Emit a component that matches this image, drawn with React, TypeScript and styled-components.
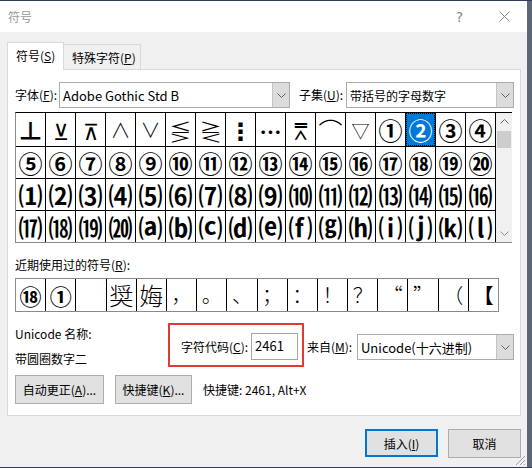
import styled, { createGlobalStyle } from 'styled-components';

const GlobalStyle = createGlobalStyle`
  html, body {
    margin: 0;
    padding: 0;
  }
  body {
    background:
      linear-gradient(#2e3f5a 0 1px, transparent 1px),
      linear-gradient(to right, #f0f0f0 0 527px, #5c6674 527px);
    font-family: "Noto Sans CJK SC", "Noto Sans", sans-serif;
    font-size: 12px;
    color: #000;
  }
  * {
    box-sizing: border-box;
  }
`;

const Window = styled.div`
  position: relative;
  margin-top: 1px;
  width: 527px;
  height: 466px;
  background: #f0f0f0;
  display: flex;
  flex-direction: column;
`;

const TitleBar = styled.div`
  height: 31px;
  background: #fff;
  display: flex;
  align-items: center;
  padding-left: 8px;
  color: #9a9a9a;
  font-size: 12px;
`;

const Title = styled.span`
  flex: 1;
`;

const TitleButton = styled.div`
  width: 45px;
  height: 31px;
  display: flex;
  align-items: center;
  justify-content: center;
  color: #8a8a8a;
  font-family: "DejaVu Sans", sans-serif;
  font-size: 14px;
`;

const Body = styled.div`
  flex: 1;
  padding: 10px 6px 0 7px;
  display: flex;
  flex-direction: column;
`;

const TabRow = styled.div`
  display: flex;
  align-items: flex-end;
  height: 28px;
  margin-bottom: -1px;
  position: relative;
  z-index: 1;
`;

const Tab = styled.div<{ $active?: boolean; $w: number }>`
  width: ${(p) => p.$w}px;
  height: ${(p) => (p.$active ? 28 : 26)}px;
  padding-left: 8px;
  padding-bottom: ${(p) => (p.$active ? 2 : 0)}px;
  background: ${(p) => (p.$active ? '#fff' : '#f0f0f0')};
  border: 1px solid #d9d9d9;
  border-bottom: ${(p) => (p.$active ? 'none' : '1px solid #d9d9d9')};
  margin-left: ${(p) => (p.$active ? 0 : -1)}px;
  display: flex;
  align-items: center;
`;

const Panel = styled.div`
  height: 347px;
  background: #fff;
  border: 1px solid #d9d9d9;
  padding: 12px 6px 0 7px;
  display: flex;
  flex-direction: column;
`;

const FontRow = styled.div`
  display: flex;
  align-items: center;
  height: 26px;
`;

const Label = styled.div<{ $w?: number; $ml?: number }>`
  width: ${(p) => (p.$w ? `${p.$w}px` : 'auto')};
  margin-left: ${(p) => p.$ml ?? 0}px;
  white-space: nowrap;
  line-height: 16px;
`;

const Combo = styled.div<{ $w?: number }>`
  width: ${(p) => (p.$w ? `${p.$w}px` : 'auto')};
  flex: ${(p) => (p.$w ? 'none' : 1)};
  height: 26px;
  border: 1px solid #acacac;
  background: #fff;
  display: flex;
  align-items: stretch;
`;

const ComboText = styled.div<{ $size?: number }>`
  flex: 1;
  padding-left: 3px;
  display: flex;
  align-items: center;
  font-size: ${(p) => p.$size ?? 12}px;
  white-space: nowrap;
`;

const ComboButton = styled.div`
  width: 17px;
  background: #dcdcdc;
  border-left: 1px solid #c4c4c4;
  display: flex;
  align-items: center;
  justify-content: center;
`;

const GridFrame = styled.div`
  margin-top: 4px;
  width: 497px;
  display: flex;
  border-top: 1px solid #000;
  border-left: 1px solid #8a8a8a;
  border-bottom: 1px solid #8a8a8a;
`;

const SymbolGrid = styled.div`
  display: grid;
  grid-template-columns: repeat(16, 29px);
  grid-template-rows: 33px repeat(3, 31px);
  gap: 1px;
  background: #000;
  border-right: 1px solid #000;
`;

const Cell = styled.div<{ $sel?: boolean; $thin?: boolean; $size?: number }>`
  background: ${(p) => (p.$sel ? '#0078d7' : '#fff')};
  color: ${(p) => (p.$sel ? '#fff' : '#000')};
  outline: ${(p) => (p.$sel ? '1px dotted #000' : 'none')};
  outline-offset: -1px;
  display: flex;
  align-items: center;
  justify-content: center;
  font-family: "Noto Sans CJK SC", "DejaVu Sans", sans-serif;
  font-weight: ${(p) => (p.$thin ? 300 : 700)};
  font-size: ${(p) => p.$size ?? 24}px;
  line-height: 1;
`;

const ScrollBar = styled.div`
  width: 16px;
  background: #f0f0f0;
  display: flex;
  flex-direction: column;
`;

const ScrollArrow = styled.div`
  height: 17px;
  display: flex;
  align-items: center;
  justify-content: center;
`;

const ScrollThumb = styled.div`
  height: 17px;
  margin: 1px 1px 0;
  background: #cdcdcd;
`;

const ScrollTrack = styled.div`
  flex: 1;
`;

const RecentLabel = styled.div`
  margin-top: 14px;
  line-height: 16px;
`;

const RecentRow = styled.div`
  margin-top: 5px;
  width: 484px;
  height: 34px;
  display: grid;
  grid-template-columns: repeat(16, 1fr);
  gap: 1px;
  background: #000;
  border: 1px solid #8a8a8a;
`;

const InfoRow = styled.div`
  margin-top: 11px;
  display: flex;
  align-items: flex-start;
`;

const NameCol = styled.div`
  width: 153px;
  padding-top: 3px;
  display: flex;
  flex-direction: column;
  gap: 9px;
  line-height: 16px;
`;

const Highlight = styled.div`
  width: 136px;
  height: 44px;
  border: 2px solid #e23a36;
  padding: 8px 4px 0 11px;
  display: flex;
  align-items: flex-start;
`;

const HighlightInner = styled.div`
  display: flex;
  align-items: center;
  height: 27px;
  width: 100%;
`;

const CodeInput = styled.div`
  margin-left: auto;
  width: 47px;
  height: 27px;
  border: 1px solid #a5a5a5;
  background: #fff;
  padding: 4px 0 0 3px;
  font-size: 13px;
  line-height: 16px;
`;

const FromGroup = styled.div`
  margin-top: 11px;
  margin-left: 3px;
  display: flex;
  align-items: center;
  flex: 1;
`;

const ButtonRow = styled.div`
  margin-top: 8px;
  display: flex;
  align-items: center;
  gap: 11px;
`;

const Button = styled.div<{ $w: number; $default?: boolean }>`
  width: ${(p) => p.$w}px;
  height: ${(p) => (p.$default ? 28 : 29)}px;
  background: #e1e1e1;
  border: 1px solid ${(p) => (p.$default ? '#0078d7' : '#adadad')};
  box-shadow: ${(p) => (p.$default ? 'inset 0 0 0 1px #0078d7' : 'none')};
  display: flex;
  align-items: center;
  justify-content: center;
  white-space: nowrap;
`;

const Footer = styled.div`
  margin-top: 13px;
  display: flex;
  justify-content: flex-end;
  gap: 10px;
`;

const Grip = styled.svg`
  position: absolute;
  right: 1px;
  bottom: 1px;
`;

const Chevron = ({ up = false, color = '#606060' }: { up?: boolean; color?: string }) => (
  <svg width="9" height="5" viewBox="0 0 9 5">
    <polyline
      points={up ? '0.5,4.5 4.5,0.5 8.5,4.5' : '0.5,0.5 4.5,4.5 8.5,0.5'}
      fill="none"
      stroke={color}
      strokeWidth="1"
    />
  </svg>
);

type Glyph = { ch: string; thin?: boolean; size?: number; sel?: boolean };

const row1: Glyph[] = [
  { ch: '⊥', size: 24 },
  { ch: '⊻', thin: true, size: 22 },
  { ch: '⊼', thin: true, size: 22 },
  { ch: '∧', thin: true, size: 20 },
  { ch: '∨', thin: true, size: 20 },
  { ch: '⋚', thin: true, size: 22 },
  { ch: '⋛', thin: true, size: 22 },
  { ch: '⋮', size: 24 },
  { ch: '⋯', size: 22 },
  { ch: '⩞', thin: true, size: 22 },
  { ch: '⌒', thin: true, size: 24 },
  { ch: '▽', thin: true, size: 18 },
  { ch: '①' },
  { ch: '②', sel: true },
  { ch: '③' },
  { ch: '④' },
];

const fromCode = (start: number, count: number) =>
  Array.from({ length: count }, (_, i) => String.fromCodePoint(start + i));

const rows: Glyph[] = [
  ...row1,
  ...fromCode(0x2464, 16).map((ch) => ({ ch })),
  ...fromCode(0x2474, 16).map((ch) => ({ ch })),
  ...fromCode(0x2484, 4).map((ch) => ({ ch })),
  ...fromCode(0x249c, 12).map((ch) => ({ ch })),
];

const recent: Glyph[] = [
  { ch: '⑱', size: 22 },
  { ch: '①', size: 22 },
  { ch: '' },
  { ch: '奨', thin: true, size: 24 },
  { ch: '娒', thin: true, size: 24 },
  { ch: '，', thin: true, size: 20 },
  { ch: '。', thin: true, size: 20 },
  { ch: '、', thin: true, size: 20 },
  { ch: '；', thin: true, size: 20 },
  { ch: '：', thin: true, size: 20 },
  { ch: '！', thin: true, size: 20 },
  { ch: '？', thin: true, size: 20 },
  { ch: '“', thin: true, size: 20 },
  { ch: '”', thin: true, size: 20 },
  { ch: '（', thin: true, size: 20 },
  { ch: '【', size: 20 },
];

export default function App() {
  return (
    <>
      <GlobalStyle />
      <Window>
        <TitleBar>
          <Title>符号</Title>
          <TitleButton>?</TitleButton>
          <TitleButton>
            <svg width="11" height="11" viewBox="0 0 11 11">
              <path d="M0.5 0.5 L10.5 10.5 M10.5 0.5 L0.5 10.5" stroke="#8a8a8a" strokeWidth="1" />
            </svg>
          </TitleButton>
        </TitleBar>
        <Body>
          <TabRow>
            <Tab $active $w={57}>
              符号(<u>S</u>)
            </Tab>
            <Tab $w={78}>
              特殊字符(<u>P</u>)
            </Tab>
          </TabRow>
          <Panel>
            <FontRow>
              <Label $w={44}>
                字体(<u>F</u>):
              </Label>
              <Combo $w={231}>
                <ComboText $size={13}>Adobe Gothic Std B</ComboText>
                <ComboButton>
                  <Chevron />
                </ComboButton>
              </Combo>
              <Label $w={47} $ml={9}>
                子集(<u>U</u>):
              </Label>
              <Combo>
                <ComboText>带括号的字母数字</ComboText>
                <ComboButton>
                  <Chevron />
                </ComboButton>
              </Combo>
            </FontRow>

            <GridFrame>
              <SymbolGrid>
                {rows.map((g, i) => (
                  <Cell key={i} $sel={g.sel} $thin={g.thin} $size={g.size}>
                    {g.ch}
                  </Cell>
                ))}
              </SymbolGrid>
              <ScrollBar>
                <ScrollArrow>
                  <Chevron up />
                </ScrollArrow>
                <ScrollThumb />
                <ScrollTrack />
                <ScrollArrow>
                  <Chevron color="#909090" />
                </ScrollArrow>
              </ScrollBar>
            </GridFrame>

            <RecentLabel>
              近期使用过的符号(<u>R</u>):
            </RecentLabel>
            <RecentRow>
              {recent.map((g, i) => (
                <Cell key={i} $thin={g.thin} $size={g.size}>
                  {g.ch}
                </Cell>
              ))}
            </RecentRow>

            <InfoRow>
              <NameCol>
                <span>Unicode 名称:</span>
                <span>带圆圈数字二</span>
              </NameCol>
              <Highlight>
                <HighlightInner>
                  <Label>
                    字符代码(<u>C</u>):
                  </Label>
                  <CodeInput>2461</CodeInput>
                </HighlightInner>
              </Highlight>
              <FromGroup>
                <Label $w={50}>
                  来自(<u>M</u>):
                </Label>
                <Combo>
                  <ComboText $size={13}>Unicode(十六进制)</ComboText>
                  <ComboButton>
                    <Chevron />
                  </ComboButton>
                </Combo>
              </FromGroup>
            </InfoRow>

            <ButtonRow>
              <Button $w={89}>
                自动更正(<u>A</u>)...
              </Button>
              <Button $w={77}>
                快捷键(<u>K</u>)...
              </Button>
              <span>快捷键: 2461, Alt+X</span>
            </ButtonRow>
          </Panel>

          <Footer>
            <Button $w={73} $default>
              插入(<u>I</u>)
            </Button>
            <Button $w={73}>取消</Button>
          </Footer>
        </Body>
        <Grip width="12" height="12" viewBox="0 0 12 12">
          <path d="M11 2 L2 11 M11 6 L6 11 M11 10 L10 11" stroke="#a0a0a0" strokeWidth="1" />
        </Grip>
      </Window>
    </>
  );
}
